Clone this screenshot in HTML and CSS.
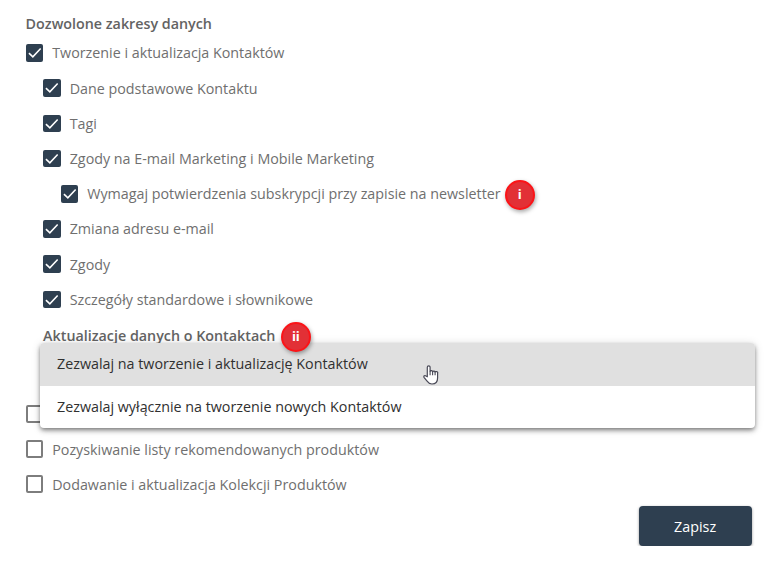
FILE: index.html
```html
<!DOCTYPE html>
<html lang="pl">
<head>
    <meta charset="UTF-8">
    <meta name="viewport" content="width=device-width, initial-scale=1.0">
    <title>Dozwolone zakresy danych</title>
    <link rel="stylesheet" href="styles.css">
</head>
<body>
    <svg class="sprite" aria-hidden="true">
        <symbol id="check" viewBox="0 0 18 18">
            <path d="M3 9.3 7 13.2 15 4.6" fill="none" stroke="#fff" stroke-width="1.6"/>
        </symbol>
    </svg>

    <form class="form">
        <h3 class="title">Dozwolone zakresy danych</h3>

        <div class="row">
            <span class="checkbox checked"><svg><use href="#check"/></svg></span>
            <span class="label">Tworzenie i aktualizacja Kontaktów</span>
        </div>
        <div class="row level-1">
            <span class="checkbox checked"><svg><use href="#check"/></svg></span>
            <span class="label">Dane podstawowe Kontaktu</span>
        </div>
        <div class="row level-1">
            <span class="checkbox checked"><svg><use href="#check"/></svg></span>
            <span class="label">Tagi</span>
        </div>
        <div class="row level-1">
            <span class="checkbox checked"><svg><use href="#check"/></svg></span>
            <span class="label">Zgody na E-mail Marketing i Mobile Marketing</span>
        </div>
        <div class="row level-2">
            <span class="checkbox checked"><svg><use href="#check"/></svg></span>
            <span class="label">Wymagaj potwierdzenia subskrypcji przy zapisie na newsletter</span>
            <span class="badge">i</span>
        </div>
        <div class="row level-1">
            <span class="checkbox checked"><svg><use href="#check"/></svg></span>
            <span class="label">Zmiana adresu e-mail</span>
        </div>
        <div class="row level-1">
            <span class="checkbox checked"><svg><use href="#check"/></svg></span>
            <span class="label">Zgody</span>
        </div>
        <div class="row level-1">
            <span class="checkbox checked"><svg><use href="#check"/></svg></span>
            <span class="label">Szczegóły standardowe i słownikowe</span>
        </div>

        <div class="select-group">
            <div class="select-head">
                <h3 class="select-title">Aktualizacje danych o Kontaktach</h3>
                <span class="badge">ii</span>
            </div>
            <div class="dropdown">
                <div class="option active">Zezwalaj na tworzenie i aktualizację Kontaktów</div>
                <div class="option">Zezwalaj wyłącznie na tworzenie nowych Kontaktów</div>
                <svg class="cursor" viewBox="0 0 16 20">
                    <path d="M4.3 11.8V2.2a1.4 1.4 0 0 1 2.8 0v4.3a1.3 1.3 0 0 1 2.5.4 1.3 1.3 0 0 1 2.5.5 1.3 1.3 0 0 1 2.5.9v4.4c0 3.8-2 6.3-5.6 6.3-2.4 0-3.7-1-4.9-2.8L1 12.3c-.6-1.2.9-2.3 1.9-1.4z" fill="#fff" stroke="#4a4a57" stroke-width="1.2" stroke-linejoin="round"/>
                    <path d="M7.1 6.5v3.7M9.6 7v3.2M12.1 7.6v2.6" fill="none" stroke="#4a4a57" stroke-width="1.1"/>
                </svg>
            </div>
        </div>

        <div class="row">
            <span class="checkbox"></span>
        </div>
        <div class="row">
            <span class="checkbox"></span>
            <span class="label">Pozyskiwanie listy rekomendowanych produktów</span>
        </div>
        <div class="row">
            <span class="checkbox"></span>
            <span class="label">Dodawanie i aktualizacja Kolekcji Produktów</span>
        </div>

        <div class="actions">
            <button type="button" class="save">Zapisz</button>
        </div>
    </form>
</body>
</html>
```
FILE: styles.css
```css
* {
    box-sizing: border-box;
}

body {
    margin: 0;
    background: #fff;
    font-family: 'Open Sans', 'Noto Sans', sans-serif;
    font-size: 14.3px;
    color: #6f6f6f;
}

.sprite {
    position: absolute;
    width: 0;
    height: 0;
}

.form {
    padding: 14px 26.4px 0 25.6px;
}

.title,
.select-title {
    margin: 0;
    font-size: 14.3px;
    font-weight: 600;
    line-height: 20px;
    color: #636363;
    white-space: nowrap;
}

.title {
    height: 21.4px;
}

.row {
    display: flex;
    align-items: center;
    height: 35.2px;
    white-space: nowrap;
}

.level-1 {
    padding-left: 17.5px;
}

.level-2 {
    padding-left: 35px;
}

.checkbox {
    flex: none;
    width: 17.6px;
    height: 17.6px;
    margin-right: 9px;
    border: 2px solid #7d7d7d;
    border-radius: 2px;
}

.checkbox.checked {
    border: none;
    background: #2e3f50;
}

.checkbox svg {
    display: block;
    width: 100%;
    height: 100%;
}

.badge {
    position: relative;
    z-index: 2;
    flex: none;
    width: 30px;
    height: 30px;
    margin: 3px 0 0 4px;
    border: 2px solid #fb1418;
    border-radius: 50%;
    background: #e23036;
    box-shadow: 1px 2px 4px rgba(0, 0, 0, 0.35);
    color: #fff;
    font-size: 13px;
    font-weight: 700;
    line-height: 25px;
    text-align: center;
}

.select-group {
    position: relative;
    height: 79.4px;
    padding: 4px 0 0 17.5px;
}

.select-head {
    display: flex;
    align-items: center;
    height: 30px;
}

.select-title {
    padding-top: 1px;
}

.select-head .badge {
    margin-top: 2px;
    margin-left: 5.5px;
}

.dropdown {
    position: absolute;
    z-index: 1;
    top: 26.5px;
    left: 14.4px;
    width: 715px;
    border-radius: 4px;
    background: #fff;
    box-shadow: 0 2px 4px -1px rgba(0, 0, 0, 0.4), 0 3px 5px rgba(0, 0, 0, 0.2), 0 1px 10px rgba(0, 0, 0, 0.14);
}

.option {
    height: 42.5px;
    padding-left: 17px;
    line-height: 42px;
    color: #303030;
    white-space: nowrap;
}

.option.active {
    border-radius: 4px 4px 0 0;
    background: #e0e0e0;
}

.cursor {
    position: absolute;
    top: 21.5px;
    left: 383px;
    width: 16px;
    height: 20px;
}

.actions {
    display: flex;
    justify-content: flex-end;
    padding-top: 4.2px;
}

.save {
    width: 113px;
    height: 40px;
    padding: 0;
    border: none;
    border-radius: 4px;
    background: #2e3f50;
    box-shadow: 0 1px 3px rgba(0, 0, 0, 0.4);
    color: #fff;
    font-family: inherit;
    font-size: 14.3px;
    font-weight: 500;
}
```
